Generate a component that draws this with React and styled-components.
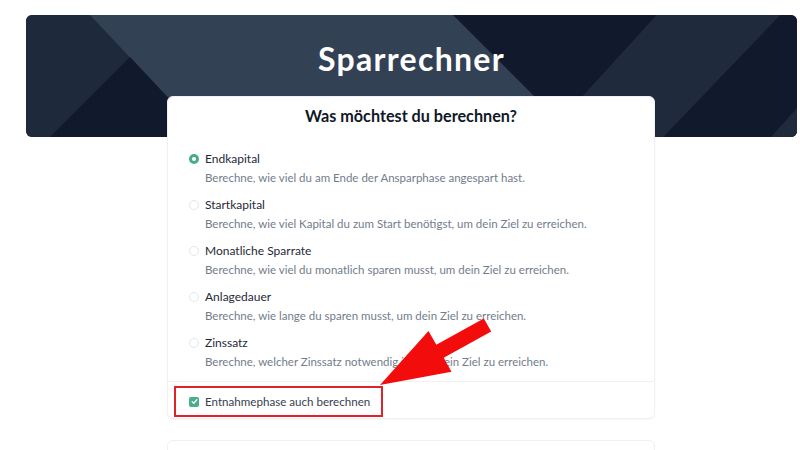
import React from "react";
import styled, { createGlobalStyle } from "styled-components";

const Global = createGlobalStyle`
  html, body { margin: 0; padding: 0; background: #ffffff; }
  body { font-family: Lato, "Noto Sans", sans-serif; -webkit-font-smoothing: antialiased; }
  * { box-sizing: border-box; }
`;

const Page = styled.div`
  position: relative;
  width: 800px;
  height: 450px;
  overflow: hidden;
  padding: 15px 3px 0 26px;
`;

const Banner = styled.header`
  position: relative;
  height: 122px;
  border-radius: 6px;
  overflow: hidden;
  background: #334155;
  display: flex;
  justify-content: center;
  padding-top: 26px;
`;

const BannerArt = styled.svg`
  position: absolute;
  inset: 0;
  width: 100%;
  height: 100%;
`;

const Title = styled.h1`
  position: relative;
  margin: 0;
  font-family: Lato, sans-serif;
  font-weight: 700;
  font-size: 32px;
  line-height: 36px;
  color: #ffffff;
  letter-spacing: 1.3px;
`;

const Card = styled.section`
  position: relative;
  width: 488px;
  margin: -41px 0 0 141px;
  background: #ffffff;
  border: 1px solid #eef0f3;
  border-radius: 6px;
  box-shadow: 0 1px 2px rgba(15, 23, 42, 0.04);
`;

const CardTitle = styled.h2`
  margin: 0;
  padding-top: 9px;
  text-align: center;
  font-size: 16.2px;
  line-height: 20px;
  font-weight: 700;
  color: #111827;
`;

const Options = styled.div`
  display: flex;
  flex-direction: column;
  gap: 11px;
  padding: 25px 21px 11px;
`;

const Option = styled.label`
  display: grid;
  grid-template-columns: 10px 1fr;
  column-gap: 6px;
  row-gap: 3px;
  align-items: center;
`;

const Radio = styled.span`
  width: 10px;
  height: 10px;
  border-radius: 50%;
  background: #ffffff;
  border: ${(p) => (p.$checked ? "3px solid #47ad87" : "1px solid #e3e6ea")};
`;

const OptLabel = styled.span`
  font-size: 12px;
  line-height: 16px;
  color: #1f2937;
`;

const OptDesc = styled.span`
  grid-column: 2;
  font-size: 11.5px;
  line-height: 16px;
  color: #737c8b;
`;

const Divider = styled.hr`
  margin: 0;
  border: 0;
  border-top: 1px solid #f0f1f4;
`;

const CheckRow = styled.div`
  padding: 4px 6px 1px;
`;

const Highlight = styled.label`
  display: inline-flex;
  align-items: center;
  gap: 6px;
  height: 31px;
  padding: 0 11px 0 13px;
  border: 2px solid #df2429;
`;

const CheckBox = styled.span`
  width: 10px;
  height: 10px;
  border-radius: 2px;
  background: #4cae89;
  display: flex;
  align-items: center;
  justify-content: center;
`;

const CheckText = styled.span`
  font-size: 11.6px;
  line-height: 16px;
  color: #374151;
`;

const NextCard = styled.section`
  width: 488px;
  height: 80px;
  margin: 21px 0 0 141px;
  background: #ffffff;
  border: 1px solid #eef0f3;
  border-radius: 6px;
`;

const Overlay = styled.svg`
  position: absolute;
  left: 0;
  top: 0;
  width: 800px;
  height: 450px;
  pointer-events: none;
`;

const options = [
  ["Endkapital", "Berechne, wie viel du am Ende der Ansparphase angespart hast.", true],
  ["Startkapital", "Berechne, wie viel Kapital du zum Start benötigst, um dein Ziel zu erreichen."],
  ["Monatliche Sparrate", "Berechne, wie viel du monatlich sparen musst, um dein Ziel zu erreichen."],
  ["Anlagedauer", "Berechne, wie lange du sparen musst, um dein Ziel zu erreichen."],
  ["Zinssatz", "Berechne, welcher Zinssatz notwendig ist, um dein Ziel zu erreichen."],
];

export default function App() {
  return (
    <>
      <Global />
      <Page>
        <Banner>
          <BannerArt viewBox="0 0 771 122" preserveAspectRatio="none">
            <polygon points="0,0 64,0 179,122 0,122" fill="#1e293b" />
            <polygon points="104,42 179,122 24,122" fill="#111a2c" />
            <polygon points="427,0 631,0 534,107" fill="#111a2c" />
            <polygon points="631,0 754,0 637,122 519,122" fill="#1f2a3c" />
            <polygon points="754,0 771,0 771,122 637,122" fill="#111a2c" />
            <polygon points="771,93 771,122 745,122" fill="#1f2a3c" />
          </BannerArt>
          <Title>Sparrechner</Title>
        </Banner>
        <Card>
          <CardTitle>Was möchtest du berechnen?</CardTitle>
          <Options>
            {options.map(([label, desc, checked]) => (
              <Option key={label}>
                <Radio $checked={checked} />
                <OptLabel>{label}</OptLabel>
                <OptDesc>{desc}</OptDesc>
              </Option>
            ))}
          </Options>
          <Divider />
          <CheckRow>
            <Highlight>
              <CheckBox>
                <svg width="7" height="7" viewBox="0 0 8 8">
                  <path d="M1.3 4.2 L3.2 6 L6.7 2" fill="none" stroke="#fff" strokeWidth="1.4" strokeLinecap="round" strokeLinejoin="round" />
                </svg>
              </CheckBox>
              <CheckText>Entnahmephase auch berechnen</CheckText>
            </Highlight>
          </CheckRow>
        </Card>
        <NextCard />
        <Overlay viewBox="0 0 800 450">
          <polygon
            points="380,385 428.5,330.9 436.3,344.8 483.8,318.5 491.2,331.5 443.7,357.8 451.5,371.7"
            fill="#f20c0c"
          />
        </Overlay>
      </Page>
    </>
  );
}
